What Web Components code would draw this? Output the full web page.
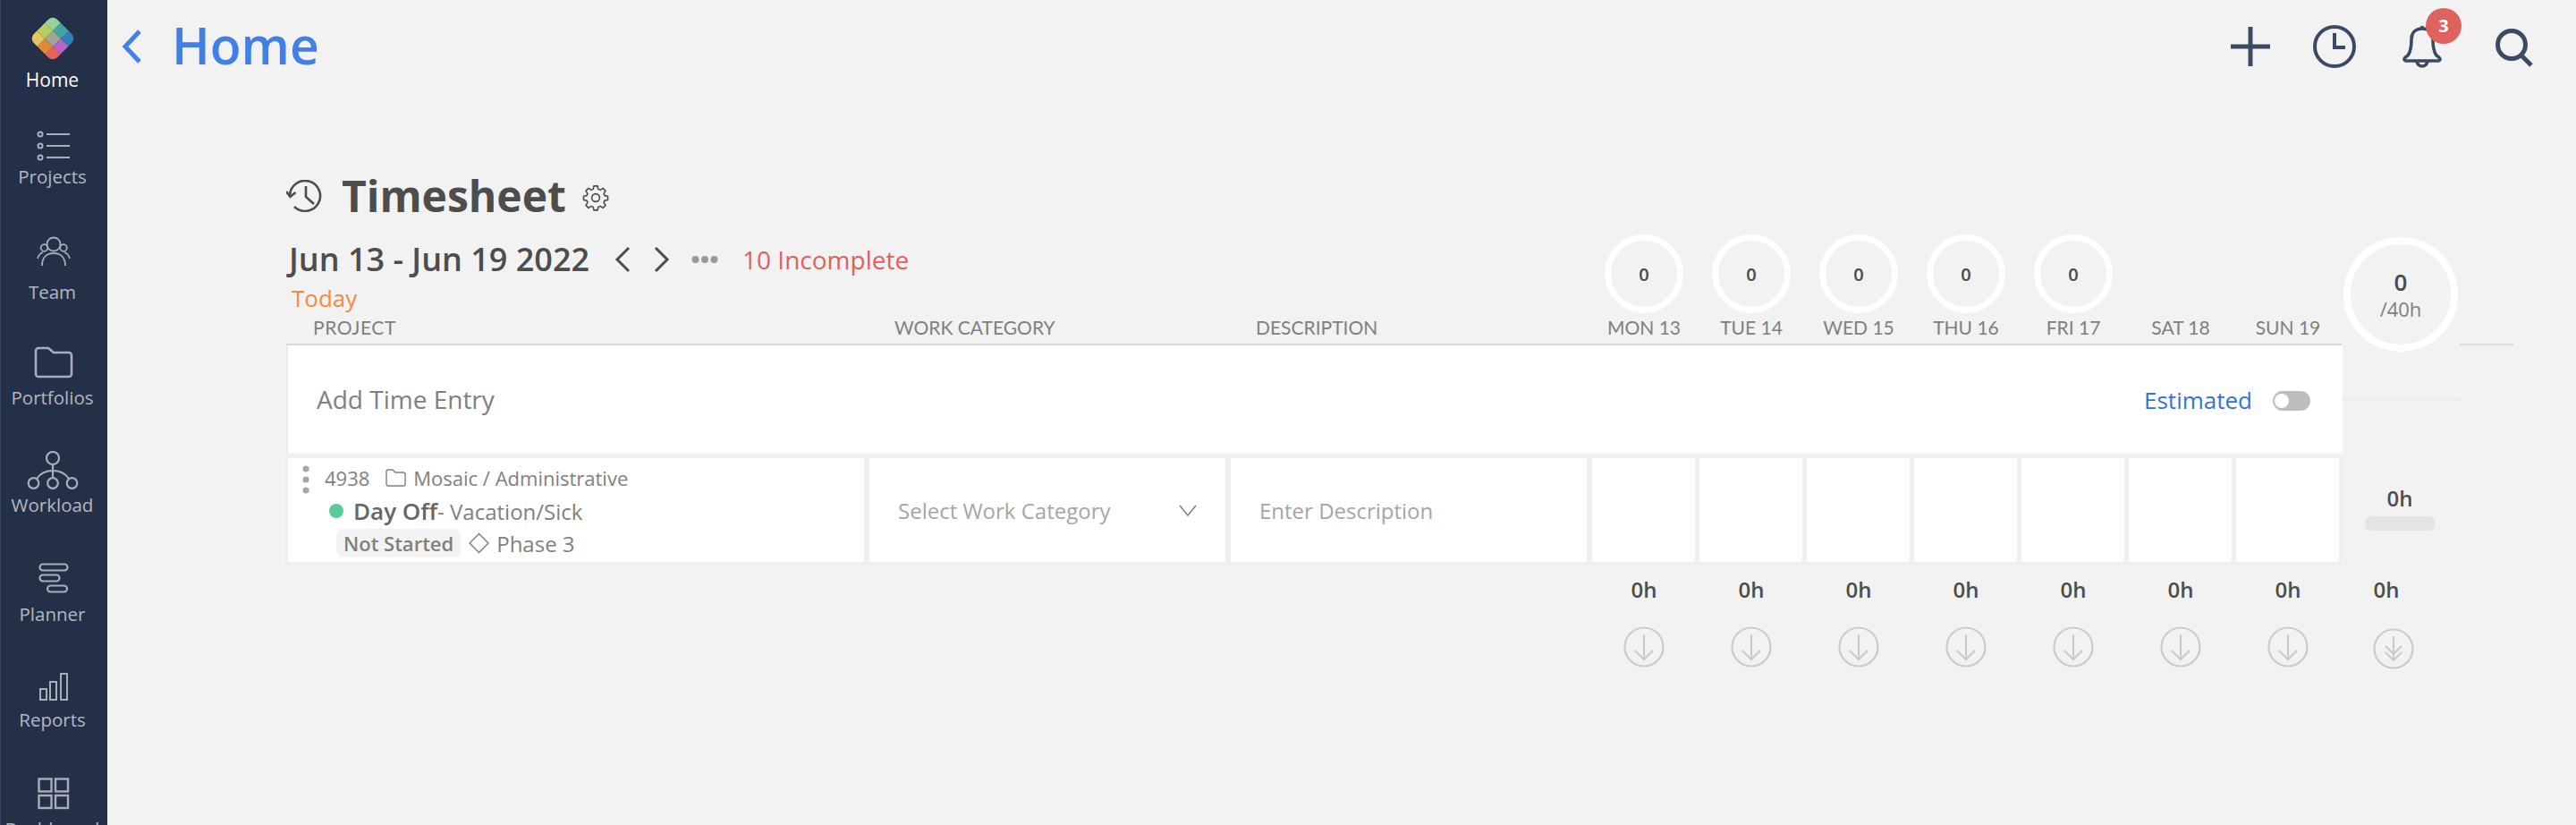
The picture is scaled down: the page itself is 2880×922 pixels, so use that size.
<!DOCTYPE html>
<html lang="en">
<head>
<meta charset="utf-8">
<title>Timesheet</title>
<style>
  html, body { margin: 0; height: 100%; background: #f2f2f2; overflow: hidden; font-family: "Open Sans", sans-serif; }
</style>
</head>
<body>
<app-shell></app-shell>
<script>
// Small helper so each component stays a short class
class Base extends HTMLElement {
  constructor() {
    super();
    this.attachShadow({ mode: 'open' });
  }
  connectedCallback() {
    this.shadowRoot.innerHTML = this.render();
  }
}

const NAV_ICONS = {
  home: `<svg width="56" height="56" viewBox="-28 -28 56 56"><defs><clipPath id="c"><rect x="-18.5" y="-18.5" width="37" height="37" rx="7"/></clipPath></defs>
    <g transform="rotate(45)" clip-path="url(#c)">
      <rect x="-19" y="-19" width="13" height="13" fill="#95d3a0"/><rect x="-6" y="-19" width="12.5" height="13" fill="#44a5a5"/><rect x="6.5" y="-19" width="13" height="13" fill="#2f7fb8"/>
      <rect x="-19" y="-6" width="13" height="12.5" fill="#b5cf62"/><rect x="-6" y="-6" width="12.5" height="12.5" fill="#9ea89a"/><rect x="6.5" y="-6" width="13" height="12.5" fill="#b864c8"/>
      <rect x="-19" y="6.5" width="13" height="13" fill="#e3c565"/><rect x="-6" y="6.5" width="12.5" height="13" fill="#e08a36"/><rect x="6.5" y="6.5" width="13" height="13" fill="#e8625a"/>
    </g></svg>`,
  projects: `<svg width="38" height="34" viewBox="0 0 38 34" fill="none" stroke="#a9adb7" stroke-width="2"><circle cx="4" cy="4" r="2.5"/><circle cx="4" cy="17" r="2.5"/><circle cx="4" cy="30" r="2.5"/><path d="M11 4h26M11 17h26M11 30h26"/></svg>`,
  team: `<svg width="38" height="36" viewBox="0 0 38 36" fill="none" stroke="#a9adb7" stroke-width="1.8"><circle cx="19" cy="10" r="7.5"/><circle cx="8.5" cy="14" r="3.8"/><circle cx="30" cy="14" r="3.8"/><path d="M6 34c0-9 5-14 13-14s13 5 13 14"/><path d="M1 26c1-4 3-6 6-7M37 26c-1-4-3-6-6-7"/></svg>`,
  portfolios: `<svg width="44" height="36" viewBox="0 0 44 36" fill="none" stroke="#a9adb7" stroke-width="2.6" stroke-linejoin="round"><path d="M2 5a3 3 0 0 1 3-3h11l6 5h17a3 3 0 0 1 3 3v21a3 3 0 0 1-3 3H5a3 3 0 0 1-3-3z"/></svg>`,
  workload: `<svg width="58" height="44" viewBox="0 0 58 44" fill="none" stroke="#a9adb7" stroke-width="2.2"><circle cx="29" cy="8" r="7"/><circle cx="7.5" cy="36" r="5.8"/><circle cx="29" cy="36" r="5.8"/><circle cx="50.5" cy="36" r="5.8"/><path d="M29 15v15M11 31c4-6 11-9 18-9s14 3 18 9"/></svg>`,
  planner: `<svg width="34" height="35" viewBox="0 0 34 35" fill="none" stroke="#a9adb7" stroke-width="2.2"><rect x="1.5" y="1.5" width="31" height="7" rx="3.5"/><rect x="1.5" y="13.5" width="22" height="7" rx="3.5"/><rect x="10" y="25.5" width="22" height="7" rx="3.5"/></svg>`,
  reports: `<svg width="32" height="31" viewBox="0 0 32 31" fill="none" stroke="#a9adb7" stroke-width="2"><rect x="1" y="18" width="7" height="12"/><rect x="12" y="10" width="7" height="20"/><rect x="24" y="1" width="7" height="29"/></svg>`,
  dashboard: `<svg width="36" height="36" viewBox="0 0 36 36" fill="none" stroke="#a9adb7" stroke-width="2.4"><rect x="1.5" y="1.5" width="14" height="14"/><rect x="20" y="1.5" width="14" height="14"/><rect x="1.5" y="20" width="14" height="14"/><rect x="20" y="20" width="14" height="14"/></svg>`
};

class NavItem extends Base {
  render() {
    const a = n => this.getAttribute(n);
    const active = a('active') !== null;
    return `<style>
      :host { display: flex; flex-direction: column; align-items: center; justify-content: flex-end; flex: none; height: ${a('h')}px; }
      svg { display: block; margin-left: ${a('shift') || 0}px; }
      .label { margin-top: ${a('gap')}px; font-size: ${active ? 21 : 20.5}px; line-height: 30px; color: ${active ? '#fff' : '#b4b7c0'}; }
    </style>${NAV_ICONS[a('icon')]}<div class="label">${a('label')}</div>`;
  }
}
customElements.define('nav-item', NavItem);

class SideNav extends Base {
  render() {
    return `<style>
      :host { display: flex; flex-direction: column; flex: none; width: 120px; height: 922px; overflow: hidden; background: #243048; border-left: 1px solid #3a4560; padding-right: 4px; box-sizing: border-box; }
    </style>
    <nav-item icon="home" label="Home" h="104" gap="3" shift="1" active></nav-item>
    <nav-item icon="projects" label="Projects" h="108" gap="2" shift="3"></nav-item>
    <nav-item icon="team" label="Team" h="129" gap="12" shift="3"></nav-item>
    <nav-item icon="portfolios" label="Portfolios" h="118" gap="6" shift="3"></nav-item>
    <nav-item icon="workload" label="Workload" h="120" gap="1"></nav-item>
    <nav-item icon="planner" label="Planner" h="122" gap="7" shift="3"></nav-item>
    <nav-item icon="reports" label="Reports" h="118" gap="6" shift="3"></nav-item>
    <nav-item icon="dashboard" label="Dashboard" h="122" gap="6" shift="3"></nav-item>`;
  }
}
customElements.define('side-nav', SideNav);

class TopBar extends Base {
  render() {
    return `<style>
      :host { display: flex; align-items: flex-start; height: 100px; box-sizing: border-box; }
      .back { display: flex; align-items: center; gap: 34px; padding: 11px 0 0 16px; color: #4180e6; font-size: 57px; font-weight: 600; line-height: 79px; }
      .back svg { margin-top: 3px; }
      .icons { margin-left: auto; display: flex; align-items: center; padding: 26px 47px 0 0; }
      .bell { position: relative; display: block; margin: 0 59px 0 52px; width: 44px; height: 48px; }
      .badge { position: absolute; left: 26px; top: -19px; width: 40px; height: 40px; border-radius: 50%; background: #de625e; color: #fff; font-size: 20px; font-weight: 700; line-height: 40px; text-align: center; }
      svg { display: block; }
    </style>
    <div class="back">
      <svg width="22" height="38" viewBox="0 0 22 38" fill="none" stroke="#4180e6" stroke-width="5"><path d="M20 2L4 19l16 17"/></svg>
      <span>Home</span>
    </div>
    <div class="icons">
      <svg width="44" height="44" viewBox="0 0 44 44" fill="none" stroke="#3b4a63" stroke-width="5"><path d="M22 0v44M0 22h44"/></svg>
      <svg style="margin-left:48px" width="48" height="48" viewBox="0 0 48 48" fill="none" stroke="#3b4a63" stroke-width="4"><circle cx="24" cy="24" r="22"/><path d="M24 9v16h12"/></svg>
      <div class="bell">
        <svg width="44" height="48" viewBox="0 0 44 48" fill="none" stroke="#3b4a63" stroke-width="3.6" stroke-linejoin="round"><path d="M22 4c-8 0-12 5-12 12 0 10-1 14-4 18-3 2-4 3-4 4s1 2 2 2h36c1 0 2-1 2-2s-1-2-4-4c-3-4-4-8-4-18 0-7-4-12-12-12zM22 4V1M16 40a6 6 0 0 0 12 0"/></svg>
        <span class="badge">3</span>
      </div>
      <svg style="margin-top:6px" width="44" height="46" viewBox="0 0 44 46" fill="none" stroke="#3b4a63" stroke-width="5"><circle cx="19" cy="18" r="15.5"/><path d="M30 30l11 11"/></svg>
    </div>`;
  }
}
customElements.define('top-bar', TopBar);

class DayRing extends Base {
  render() {
    return `<style>
      :host { display: flex; justify-content: center; }
      div { width: 88px; height: 88px; box-sizing: border-box; border: 7px solid #fff; border-radius: 50%; display: flex; align-items: center; justify-content: center; font-size: 20px; font-weight: 600; color: #4a4a4a; }
    </style><div><slot></slot></div>`;
  }
}
customElements.define('day-ring', DayRing);

class TotalRing extends Base {
  render() {
    return `<style>
      :host { position: absolute; left: 2300px; top: 165px; width: 128px; height: 128px; box-sizing: border-box; border: 8px solid #fff; border-radius: 50%; background: #f2f2f2; display: flex; flex-direction: column; align-items: center; justify-content: center; color: #4a4a4a; }
      b { font-size: 26px; font-weight: 600; line-height: 30px; margin-top: 2px; }
      span { font-size: 22px; line-height: 30px; color: #808080; }
    </style><b>0</b><span>/40h</span>`;
  }
}
customElements.define('total-ring', TotalRing);

class TimeSheet extends Base {
  render() {
    const days = ['MON 13','TUE 14','WED 15','THU 16','FRI 17','SAT 18','SUN 19'];
    const rings = [0,0,0,0,0].map(v => `<day-ring>${v}</day-ring>`).join('');
    return `<style>
      :host { display: block; position: relative; margin-left: 200px; width: 2490px; padding-top: 96px; }
      .title { display: flex; align-items: center; height: 66px; box-sizing: border-box; padding-bottom: 20px; }
      .title h1 { margin: 0 0 0 22px; font-size: 48px; font-weight: 700; line-height: 46px; color: #4d4d4d; }
      .title svg:last-child { margin-left: 18px; margin-top: 4px; }
      .top { display: grid; grid-template-columns: 1458px repeat(7, 120px); height: 90px; }
      .date { display: flex; align-items: center; height: 40px; margin-top: 8px; padding-left: 3px; }
      .date strong { font-size: 36px; font-weight: 600; color: #4d4d4d; line-height: 40px; }
      .date svg { display: block; }
      .warn { margin-left: 27px; font-size: 28px; color: #e0605c; }
      .today { margin: 8px 0 0 6px; font-size: 26px; line-height: 30px; color: #f58a3d; }
      .labels { display: grid; grid-template-columns: 680px 404px 374px repeat(7, 120px); height: 32px; border-bottom: 2px solid #d8d8d8; width: 2298px; font: 21px/28px Lato, sans-serif; color: #808080; }
      .labels span:nth-child(1) { padding-left: 30px; letter-spacing: .6px; }
      .labels span:nth-child(n+4) { text-align: center; }
      .tail { position: absolute; left: 2430px; top: 284px; width: 60px; height: 2px; background: #dedede; }
      .faint { position: absolute; left: 2299px; top: 345px; width: 131px; height: 3px; background: #ececec; }
    </style>
    <div class="title">
      <svg width="40" height="36" viewBox="0 0 40 36" fill="none" stroke="#4d4d4d" stroke-width="2.6"><path d="M4 18a17 17 0 1 1 5 12M0 13l4.5 6 6-5M22 7v12l9 8"/></svg>
      <h1>Timesheet</h1>
      <svg width="30" height="30" viewBox="0 0 24 24" fill="none" stroke="#4d4d4d" stroke-width="1.3" stroke-linejoin="round"><circle cx="12" cy="12" r="3.5"/><path d="M10.3 1.5h3.4l.5 2.8 1.8.8 2.4-1.6 2.4 2.4-1.6 2.4.8 1.8 2.8.5v3.4l-2.8.5-.8 1.8 1.6 2.4-2.4 2.4-2.4-1.6-1.8.8-.5 2.8h-3.4l-.5-2.8-1.8-.8-2.4 1.6-2.4-2.4 1.6-2.4-.8-1.8-2.8-.5v-3.4l2.8-.5.8-1.8-1.6-2.4 2.4-2.4 2.4 1.6 1.8-.8z"/></svg>
    </div>
    <div class="top">
      <div>
        <div class="date">
          <strong>Jun 13 - Jun 19 2022</strong>
          <svg style="margin-left:28px" width="18" height="30" viewBox="0 0 18 30" fill="none" stroke="#4d4d4d" stroke-width="3"><path d="M16 2L3 15l13 13"/></svg>
          <svg style="margin-left:26px" width="18" height="30" viewBox="0 0 18 30" fill="none" stroke="#4d4d4d" stroke-width="3"><path d="M2 2l13 13L2 28"/></svg>
          <svg style="margin-left:24px" width="30" height="10" viewBox="0 0 30 10" fill="#9a9a9a"><circle cx="4.5" cy="5" r="4"/><circle cx="15" cy="5" r="4"/><circle cx="25.5" cy="5" r="4"/></svg>
          <span class="warn">10 Incomplete</span>
        </div>
        <div class="today">Today</div>
      </div>
      ${rings}
    </div>
    <div class="labels">
      <span>PROJECT</span><span>WORK CATEGORY</span><span>DESCRIPTION</span>
      ${days.map(d => `<span>${d}</span>`).join('')}
    </div>
    <total-ring></total-ring>
    <i class="tail"></i><i class="faint"></i>
    <add-entry></add-entry>
    <time-row></time-row>
    <day-totals></day-totals>`;
  }
}
customElements.define('time-sheet', TimeSheet);

class AddEntry extends Base {
  render() {
    return `<style>
      :host { display: flex; align-items: center; box-sizing: border-box; width: 2299px; height: 120px; background: #fff; border-left: 2px solid #ececec; padding: 0 36px 0 32px; font-size: 28px; color: #808080; }
      .est { margin-left: auto; color: #3573d4; font-size: 26px; padding-top: 2px; }
      .toggle { position: relative; margin: 4px 0 0 23px; width: 42px; height: 22px; border-radius: 11px; background: #bdbdbd; }
      .toggle::before { content: ""; position: absolute; left: 2px; top: 3px; width: 16px; height: 16px; border-radius: 50%; background: #fff; }
    </style>
    <span>Add Time Entry</span><span class="est">Estimated</span><div class="toggle"></div>`;
  }
}
customElements.define('add-entry', AddEntry);

class TimeRow extends Base {
  render() {
    const cells = Array(7).fill('<div class="cell day"></div>').join('');
    return `<style>
      :host { display: flex; align-items: stretch; gap: 5px; box-sizing: border-box; width: 2490px; height: 122px; margin-top: 3px; padding: 3px 0 3px 2px; color: #808080; }
      .cell { background: #fff; flex: none; box-sizing: border-box; outline: 3px solid #efefef; }
      .project { width: 644px; position: relative; padding-left: 41px; margin-right: 1px; }
      .line { display: flex; align-items: center; white-space: nowrap; }
      .l1 { height: 30px; margin-top: 7px; font-size: 22px; }
      .l1 svg { margin: 0 8px 0 18px; }
      .l2 { height: 32px; margin: 6px 0 0 5px; font-size: 24px; }
      .l2 i { width: 16px; height: 16px; border-radius: 50%; background: #57cc99; margin-right: 11px; }
      .l2 b { font-size: 26px; font-weight: 600; color: #666; }
      .l3 { height: 32px; margin: 4px 0 0 13px; font-size: 24px; }
      .tag { background: #f3f3f3; border-radius: 8px; padding: 0 8px; font-size: 22px; font-weight: 600; line-height: 32px; color: #808080; }
      .l3 svg { margin: 0 8px 0 9px; }
      .kebab { position: absolute; left: 16px; top: 8px; }
      .select, .desc { display: flex; align-items: center; font-size: 24px; color: #a5a5a5; padding-left: 32px; height: 116px; }
      .select { width: 398px; margin-right: 1px; padding-right: 32px; justify-content: space-between; }
      .desc { width: 398px; margin-right: 1px; }
      .day { width: 115px; }
      .sum { flex: 1; display: flex; flex-direction: column; align-items: center; margin-left: 18px; max-width: 90px; }
      .sum span { font-size: 24px; font-weight: 600; color: #4d4d4d; line-height: 32px; margin-top: 29px; }
      .sum i { width: 78px; height: 16px; border-radius: 6px; background: #e4e4e4; margin-top: 4px; }
    </style>
    <div class="cell project">
      <svg class="kebab" width="8" height="32" viewBox="0 0 8 32" fill="#a5a5a5"><circle cx="4" cy="4" r="3.5"/><circle cx="4" cy="16" r="3.5"/><circle cx="4" cy="28" r="3.5"/></svg>
      <div class="line l1">4938<svg width="23" height="20" viewBox="0 0 23 20" fill="none" stroke="#808080" stroke-width="1.4"><path d="M1 3a2 2 0 0 1 2-2h5l3 3h9a2 2 0 0 1 2 2v11a2 2 0 0 1-2 2H3a2 2 0 0 1-2-2z"/></svg>Mosaic / Administrative</div>
      <div class="line l2"><i></i><b>Day Off</b>- Vacation/Sick</div>
      <div class="line l3"><span class="tag">Not Started</span><svg width="23" height="24" viewBox="0 0 23 24" fill="none" stroke="#808080" stroke-width="1.5"><path d="M11.5 1.5L22 12 11.5 22.5 1 12z"/></svg>Phase 3</div>
    </div>
    <div class="cell select"><span>Select Work Category</span><svg width="20" height="13" viewBox="0 0 20 13" fill="none" stroke="#808080" stroke-width="1.5"><path d="M1 1l9 11 9-11"/></svg></div>
    <div class="cell desc">Enter Description</div>
    ${cells}
    <div class="sum"><span>0h</span><i></i></div>`;
  }
}
customElements.define('time-row', TimeRow);

class DayTotals extends Base {
  render() {
    const arrow = d => `<svg width="46" height="46" viewBox="0 0 46 46" fill="none" stroke="#cbcbcb" stroke-width="2.2"><circle cx="23" cy="23" r="21.5"/>${d}</svg>`;
    const col = `<div><b>0h</b>${arrow('<path d="M23 9v28M13 27l10 10 10-10"/>')}</div>`;
    return `<style>
      :host { display: grid; grid-template-columns: repeat(7, 120px) 110px; margin: 10px 0 0 1458px; color: #4d4d4d; }
      div { display: flex; flex-direction: column; align-items: center; }
      b { font-size: 24px; font-weight: 600; line-height: 36px; }
      svg { display: block; margin-top: 23px; }
      .all b { margin-left: -10px; }
      .all svg { margin: 25px 0 0 6px; }
    </style>
    ${col.repeat(7)}
    <div class="all"><b>0h</b>${arrow('<path d="M23 9v26M14 20l9 9 9-9M14 27l9 9 9-9"/>')}</div>`;
  }
}
customElements.define('day-totals', DayTotals);

class AppShell extends Base {
  render() {
    return `<style>
      :host { display: flex; height: 922px; overflow: hidden; }
      main { flex: 1; min-width: 0; }
    </style>
    <side-nav></side-nav>
    <main><top-bar></top-bar><time-sheet></time-sheet></main>`;
  }
}
customElements.define('app-shell', AppShell);
</script>
</body>
</html>
